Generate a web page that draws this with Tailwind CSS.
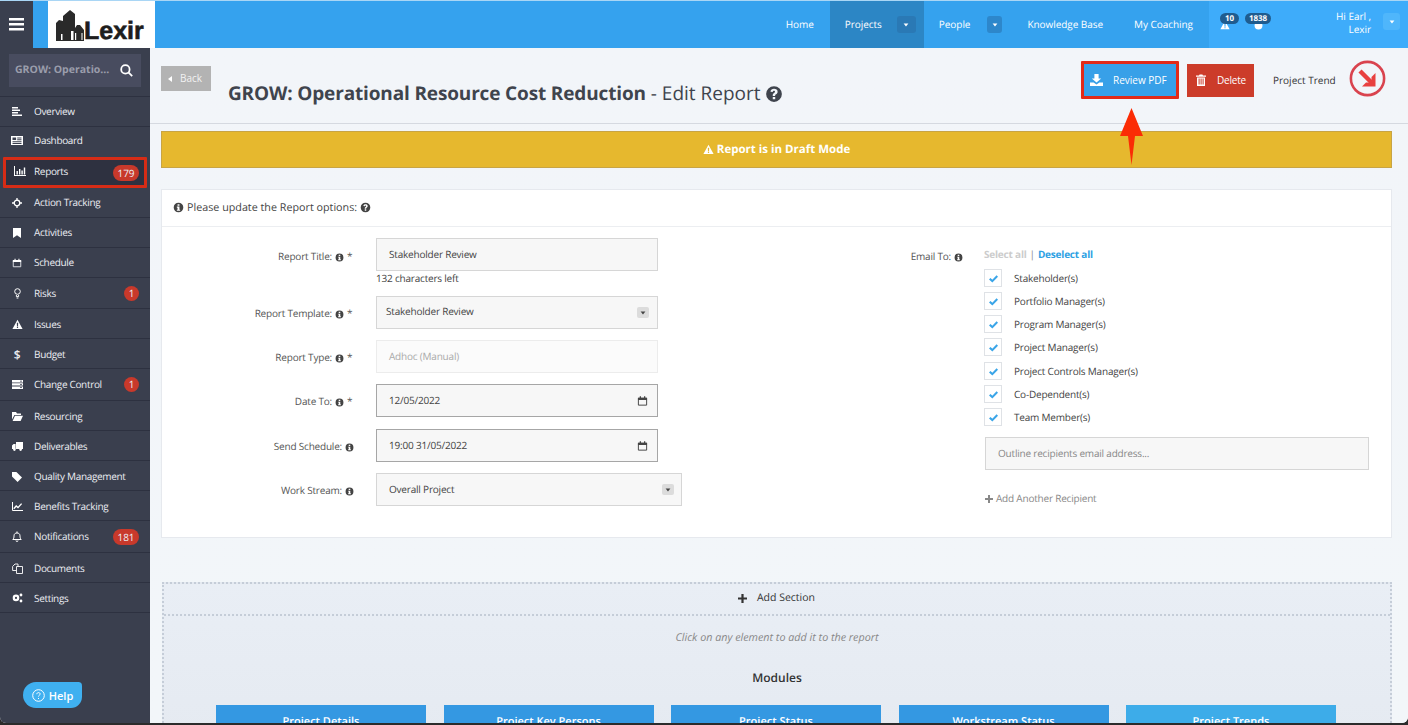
<!DOCTYPE html>
<html lang="en">
<head>
  <meta charset="UTF-8">
  <title>Edit Report</title>
  <script src="https://cdn.jsdelivr.net/npm/@tailwindcss/browser@4"></script>
</head>
<body class="bg-[#2b2b2b] overflow-hidden font-['Open_Sans',sans-serif] [text-rendering:geometricPrecision]">
  <!-- shared icons -->
  <svg class="hidden">
    <symbol id="info" viewBox="0 0 16 16"><path fill-rule="evenodd" d="M8 1a7 7 0 1 1 0 14A7 7 0 0 1 8 1zM6.6 3.2v2.3h2.8V3.2zM5.6 6.6v1.6h1v3H5.6v1.6h4.8v-1.6h-1V6.6z"/></symbol>
    <symbol id="question" viewBox="0 0 16 16"><path fill-rule="evenodd" d="M8 1a7 7 0 1 1 0 14A7 7 0 0 1 8 1zM6.9 10.6v2h2.2v-2zM8 3.4c-1.7 0-2.9.9-3.1 2.5l2 .3c.1-.7.5-1 1-1 .6 0 1 .3 1 .8s-.4.7-.9 1.1c-.7.5-1.1 1-1.1 1.9v.7h2.1v-.4c0-.4.3-.7.8-1 .8-.6 1.4-1.2 1.4-2.4 0-1.6-1.4-2.5-3.2-2.5z"/></symbol>
    <symbol id="warn" viewBox="0 0 16 16"><path fill-rule="evenodd" d="M8 1.2l7.4 13.4H.6zM7 5.6l.2 5h1.6l.2-5zM7.1 11.4v1.8h1.8v-1.8z"/></symbol>
    <symbol id="cal" viewBox="0 0 16 16"><path fill="none" stroke="currentColor" stroke-width="1.4" d="M2 4h12v10H2z"/><path d="M1.4 3.2h13.2v3.2H1.4zM4 1.2h1.8v3H4zM10.2 1.2H12v3h-1.8z"/></symbol>
    <symbol id="check" viewBox="0 0 16 16"><path fill="none" stroke="#3aa5e8" stroke-width="3" d="M2.5 8.2l3.8 3.6 7.2-7.4"/></symbol>
    <symbol id="caret" viewBox="0 0 10 6"><path d="M1 0.5h8L5 5.5z"/></symbol>
    <linearGradient id="tower" x1="0" x2="1" y1="0" y2="0"><stop offset="0" stop-color="#eee"/><stop offset="1" stop-color="#777"/></linearGradient>
  </svg>

  <div class="w-[1408px] h-[723px] flex flex-col overflow-hidden relative rounded-b-[6px] bg-[#f1f4f8]">
    <!-- top bar -->
    <header class="h-[48px] shrink-0 flex bg-[#35a2ee] border-t border-[#a9d6f5] text-white text-[10px] tracking-[-0.05px] leading-[13px]">
      <button class="w-[33px] bg-[#3a3f4e] flex items-center justify-center">
        <svg width="15" height="13" viewBox="0 0 15 13" fill="#fff"><path d="M0 0h15v2.6H0zM0 5h15v2.6H0zM0 10h15v2.6H0z"/></svg>
      </button>
      <div class="w-[15px]"></div>
      <div class="w-[107px] bg-white flex items-start pl-[8px] pt-[8px]">
        <svg class="mt-[1px]" width="28" height="31" viewBox="0 0 28 31">
          <path fill="#2a2a2a" d="M0 31V13l3-3 4 1V6l7-6 5 4v14l2-3 3 0 4 5v11z"/>
          <path fill="url(#tower)" d="M1.5 30V14l3-2v18zM8 30V8l5-5v27zM21 30V18h4v12z"/>
          <path fill="#fff" d="M5 30V24h1.5v6zM15 30V21h2.5v9zM19 30V23h1.2v7zM25.5 30v-7h1v7z"/>
        </svg>
        <span class="font-['Liberation_Sans',sans-serif] font-bold text-[#1d1d1d] text-[25px] tracking-normal leading-[25px] mt-[10px] [-webkit-text-stroke:0.6px_#1d1d1d]">Lexir</span>
      </div>
      <nav class="flex-1 flex items-center justify-end">
        <a class="mr-[16px]">Home</a>
        <div class="w-[94px] h-full bg-[#2c86c5] flex items-center pl-[15px]">
          <span>Projects</span>
          <span class="ml-auto mr-[8px] w-[19px] h-[17px] rounded-[3px] bg-[#2a79b5] flex items-center justify-center"><svg width="6" height="4" fill="#fff"><use href="#caret"/></svg></span>
        </div>
        <a class="ml-[15px]">People</a>
        <span class="ml-[17px] w-[15px] h-[17px] rounded-[3px] bg-[#2d87cb] flex items-center justify-center"><svg width="6" height="4" fill="#fff"><use href="#caret"/></svg></span>
        <a class="ml-[25px]">Knowledge Base</a>
        <a class="ml-[31px]">My Coaching</a>
        <div class="ml-[16px] w-[199px] h-full bg-[#3eacfa] flex items-center relative">
          <div class="relative w-[40px] h-full">
            <svg class="absolute left-[11px] top-[19px]" width="10" height="10" fill="#fff"><use href="#warn"/></svg>
            <span class="absolute left-[11px] top-[12px] h-[11px] px-[5px] rounded-full bg-[#1f5c8f] text-[8px] leading-[11px] font-bold">10</span>
          </div>
          <div class="relative w-[40px] h-full">
            <svg class="absolute left-[5px] top-[20px]" width="9" height="9" viewBox="0 0 16 16" fill="#fff"><path d="M8 1a7 7 0 1 1 0 14A7 7 0 0 1 8 1z"/></svg>
            <span class="absolute -left-[4px] top-[12px] h-[11px] px-[4px] rounded-full bg-[#1f5c8f] text-[8px] leading-[11px] font-bold">1838</span>
          </div>
          <div class="ml-auto text-right leading-[13px] mt-[-3px]">Hi Earl ,<br>Lexir</div>
          <span class="ml-[12px] mr-[8px] w-[17px] h-[17px] mt-[-6px] rounded-[3px] bg-[#4fb6fb] flex items-center justify-center"><svg width="6" height="4" fill="#fff"><use href="#caret"/></svg></span>
        </div>
      </nav>
    </header>

    <div class="flex flex-1 min-h-0">
      <!-- sidebar -->
      <aside class="w-[150px] shrink-0 bg-[#3a3f4e] flex flex-col text-[#eceef3] text-[10px] tracking-[-0.33px] leading-[13px]">
        <div class="h-[49px] border-b border-[#2d3140] px-[9px] pt-[6px]">
          <div class="h-[33px] bg-[#484c5f] flex items-center pl-[6px] pr-[8px] justify-between">
            <span class="font-bold text-[10.5px] tracking-normal text-[#9a9dab]">GROW: Operatio...</span>
            <svg width="13" height="13" viewBox="0 0 13 13" fill="none" stroke="#fff" stroke-width="1.8"><circle cx="5.4" cy="5.4" r="4.2"/><path d="M8.4 8.4l3.8 3.8"/></svg>
          </div>
        </div>
        <a class="h-[30px] flex items-center border-b border-[#2d3140]"><span class="w-[34px] flex justify-center pr-[1px]"><svg width="11" height="10" fill="#fff"><path d="M1 0h6v1.5H1zM1 2.5h8v1.5H1zM1 5h6v1.5H1zM1 7.5h10V9H1z"/></svg></span>Overview</a>
        <a class="h-[30px] flex items-center pb-[3px]"><span class="w-[34px] flex justify-center"><svg width="12" height="9" fill="#fff"><path fill-rule="evenodd" d="M0 0h12v9H0zM1.5 1.5v2.6h3.6V1.5zM6.2 1.5V2.5h4.3v-1zM6.2 3.3v1h4.3v-1zM1.5 5.2v1h9v-1zM1.5 7v.9h9V7z"/></svg></span>Dashboard</a>
        <!-- highlighted entry -->
        <a class="h-[31px] mx-[3px] flex items-center border-[3px] border-[#d62c16] bg-[#2e3140] rounded-[1px] pr-[5px] pb-[3px]"><span class="w-[28px] flex justify-center"><svg width="12" height="10" fill="#fff"><path d="M0 0h1v9h11v1H0zM2.5 5h1.4v3.5H2.5zM5 3h1.4v5.5H5zM7.4 4.4h1.4v4.1H7.4zM9.8 1.4h1.4v7.1H9.8z"/></svg></span>Reports<span class="ml-auto h-[16px] w-[26px] text-center mt-[3px] rounded-full bg-[#c8392b] tracking-normal leading-[16px]">179</span></a>
        <a class="h-[30px] flex items-center border-b border-[#2d3140]"><span class="w-[34px] flex justify-center"><svg width="10" height="10" viewBox="0 0 10 10" fill="none" stroke="#fff" stroke-width="1.3"><circle cx="5" cy="5" r="2.8"/><path d="M5 0v3M5 7v3M0 5h3M7 5h3"/></svg></span>Action Tracking</a>
        <a class="h-[30px] flex items-center border-b border-[#2d3140]"><span class="w-[34px] flex justify-center"><svg width="8" height="10" fill="#fff"><path d="M0 0h8v10L4 7.2 0 10z"/></svg></span>Activities</a>
        <a class="h-[30px] flex items-center border-b border-[#2d3140]"><span class="w-[34px] flex justify-center"><svg width="10" height="10" fill="#fff"><use href="#cal"/></svg></span>Schedule</a>
        <a class="h-[31px] flex items-center border-b border-[#2d3140] pr-[11px]"><span class="w-[34px] flex justify-center"><svg width="7" height="11" viewBox="0 0 7 11" fill="none" stroke="#fff"><circle cx="3.5" cy="3.5" r="2.8"/><path d="M2.4 7v1.6h2.2V7M2.6 10h1.8"/></svg></span><span>Risks</span><span class="ml-auto w-[15px] h-[15px] rounded-full bg-[#c8392b] text-center leading-[15px]">1</span></a>
        <a class="h-[30px] flex items-center border-b border-[#2d3140] pt-[2px]"><span class="w-[34px] flex justify-center"><svg width="11" height="11" fill="#fff"><use href="#warn"/></svg></span>Issues</a>
        <a class="h-[30px] flex items-center border-b border-[#2d3140] pt-[2px]"><span class="w-[34px] flex justify-center text-[12px] font-semibold">$</span>Budget</a>
        <a class="h-[32px] flex items-center border-b border-[#2d3140] pr-[11px]"><span class="w-[34px] flex justify-center"><svg width="11" height="9" fill="#fff"><path d="M0 0h11v2.4H0zM0 3.2h11v2.4H0zM0 6.4h11V9H0z"/><path fill="#3a3f4e" d="M8 .8h2v.8H8zM8 4h2v.8H8zM8 7.2h2V8H8z"/></svg></span><span>Change Control</span><span class="ml-auto w-[15px] h-[15px] rounded-full bg-[#c8392b] text-center leading-[15px]">1</span></a>
        <a class="h-[30px] flex items-center border-b border-[#2d3140] pt-[2px]"><span class="w-[34px] flex justify-center"><svg width="11" height="9" fill="#fff"><path d="M0 0h4l1 1.4h4V3H2.4L0 7.4zM3 3.8h8L8.6 9H.6z"/></svg></span>Resourcing</a>
        <a class="h-[30px] flex items-center border-b border-[#2d3140] pt-[2px]"><span class="w-[34px] flex justify-center"><svg width="11" height="9" fill="#fff"><path d="M4 0h7v7H4zM0 3.4L1.6 2h2v5H0z"/><circle cx="2.4" cy="7.6" r="1.3"/><circle cx="8.6" cy="7.6" r="1.3"/></svg></span>Deliverables</a>
        <a class="h-[30px] flex items-center border-b border-[#2d3140] pt-[2px]"><span class="w-[34px] flex justify-center"><svg width="10" height="10" fill="#fff"><path d="M0 0h4.4L10 5.6 5.6 10 0 4.4z"/></svg></span>Quality Management</a>
        <a class="h-[30px] flex items-center border-b border-[#2d3140] pt-[1px]"><span class="w-[34px] flex justify-center"><svg width="11" height="9" fill="none" stroke="#fff"><path d="M.5 0v8.5H11"/><path stroke-width="1.4" d="M1.8 6.8L4.2 4l1.8 1.6L9.6 1.6"/></svg></span>Benefits Tracking</a>
        <a class="h-[32px] flex items-center border-b border-[#2d3140] pr-[5px]"><span class="w-[34px] flex justify-center pb-[1px]"><svg width="10" height="11" viewBox="0 0 10 11" fill="none" stroke="#fff"><path d="M.8 8.5c1-1 1.2-2 1.2-3.6C2 3 3.2 2 5 2s3 1 3 2.9c0 1.6.2 2.6 1.2 3.6zM5 .4V2M4 9.5a1 1 0 0 0 2 0"/></svg></span><span class="pb-[1px]">Notifications</span><span class="ml-auto mr-[6px] h-[16px] w-[26px] text-center rounded-full bg-[#c8392b] tracking-normal leading-[16px]">181</span></a>
        <a class="h-[30px] flex items-center border-b border-[#2d3140] pt-[1px]"><span class="w-[34px] flex justify-center"><svg width="11" height="11" viewBox="0 0 11 11" fill="none" stroke="#fff" stroke-width=".9"><path d="M4.5 3.5h6v7h-6zM4.5 7.5H.6v-4L3 1h3v2.5"/></svg></span>Documents</a>
        <a class="h-[30px] flex items-center border-b border-[#2d3140] pt-[1px]"><span class="w-[34px] flex justify-center"><svg width="11" height="10" viewBox="0 0 11 10" fill="#fff"><path fill-rule="evenodd" d="M4 1.6A3.3 3.3 0 1 1 4 8.2 3.3 3.3 0 0 1 4 1.6zM4 3.8a1.1 1.1 0 1 0 0 2.2 1.1 1.1 0 0 0 0-2.2z"/><circle cx="9" cy="2" r="1.4"/><circle cx="9" cy="8" r="1.4"/></svg></span>Settings</a>
        <button class="mt-auto mb-[15px] ml-[23px] w-[59px] h-[26px] bg-[#3fb0f0] rounded-tl-[14px] rounded-bl-[14px] rounded-tr-[4px] rounded-br-[12px] flex items-center justify-center gap-[4px] text-white text-[11px] tracking-normal font-semibold">
          <svg width="13" height="13" viewBox="0 0 13 13" fill="none" stroke="#fff"><circle cx="6.5" cy="6.5" r="5.8"/><path d="M4.8 5.2c0-1 .8-1.6 1.7-1.6s1.7.6 1.7 1.5-1.7 1.2-1.7 2.4M6.5 9v1"/></svg>
          Help
        </button>
      </aside>

      <!-- main content -->
      <main class="flex-1 min-w-0 relative overflow-hidden bg-gradient-to-b from-[#f2f5f9] to-[#f2f6f9]">
        <div class="h-[76px] border-b border-[#d5d9e0] flex pl-[11px] relative">
          <button class="mt-[18px] w-[50px] h-[25px] bg-[#b3b3b3] text-[#f2f2f2] text-[10px] flex items-center justify-center gap-[8px] pr-[2px]">
            <svg width="4" height="6" viewBox="0 0 4 6" fill="#fff"><path d="M4 0v6L0 3z"/></svg>Back
          </button>
          <h1 class="ml-[17px] mt-[31px] text-[19px] leading-[28px] text-[#3f444d] whitespace-nowrap"><b class="font-bold tracking-[-0.15px]">GROW: Operational Resource Cost Reduction</b> - Edit Report <svg class="inline w-[18px] h-[18px] align-[-3px]" fill="#3f444d"><use href="#question"/></svg></h1>

          <div class="ml-auto flex items-center h-[64px] text-[10px]">
            <div class="border-[3px] border-[#e32a17] rounded-[1px] mr-[8px]">
              <button class="w-[92px] h-[32px] bg-[#38a0e8] text-white flex items-center pl-[6px] gap-[10px]">
                <svg width="13" height="12" viewBox="0 0 13 12" fill="#fff"><path d="M4.4 0h4.2v4.4h2.6L6.5 8.6 1.8 4.4h2.6zM0 8.4h3.6l2.9 2 2.9-2H13V12H0z"/></svg><span>Review PDF</span>
              </button>
            </div>
            <button class="w-[67px] h-[33px] bg-[#cc3c2a] text-white tracking-[-0.2px] flex items-center pl-[9px] gap-[11px]">
              <svg width="10" height="12" viewBox="0 0 10 12" fill="#fff"><path fill-rule="evenodd" d="M0 1.6h3L3.6.4h2.8L7 1.6h3v1.2H0zM1 3.4h8V12H1zM2.6 4.6v6h1v-6zM4.6 4.6v6h1v-6zM6.6 4.6v6h1v-6z"/></svg><span>Delete</span>
            </button>
            <span class="ml-[19px] w-[63px] text-[#333] whitespace-nowrap">Project Trend</span>
            <svg class="ml-[13px] mr-[22px] -mt-[3px]" width="37" height="37" viewBox="0 0 37 37" fill="none"><circle cx="18.5" cy="18.5" r="16.6" stroke="#d9434e" stroke-width="2.6"/><path stroke="#e8403f" stroke-width="4.4" d="M11 11l13 13"/><path fill="#e8403f" d="M26.5 13v13.5H13l4-4h5.5V17z"/></svg>
          </div>
        </div>

        <div class="ml-[11px] mr-[16px] mt-[7px] h-[37px] bg-[#e6b82e] border border-[#c8a444] flex items-center justify-center gap-[3px] text-white font-bold text-[11.5px]">
          <svg width="11" height="11" fill="#fff"><use href="#warn"/></svg> Report is in Draft Mode
        </div>

        <!-- options card -->
        <section class="ml-[11px] mr-[16px] mt-[21px] h-[349px] bg-white border border-[#e6e9ee] text-[10px] tracking-[-0.2px] leading-[13px] text-[#555]">
          <div class="h-[37px] border-b border-[#eceef1] flex items-center pl-[11px] pb-[1px] gap-[3px] text-[#444] text-[10.75px] leading-[14px] tracking-normal">
            <svg width="11" height="11" fill="#444"><use href="#info"/></svg> Please update the Report options: <svg width="11" height="11" fill="#444"><use href="#question"/></svg>
          </div>
          <div class="flex">
            <!-- left column -->
            <div class="w-[740px] pt-[11px]">
              <div class="flex">
                <div class="w-[192px] h-[33px] pt-[12px] flex justify-end gap-[3px] whitespace-nowrap">Report Title: <svg class="mt-[3px]" width="9" height="9" fill="#444"><use href="#info"/></svg><span class="w-[7px]">*</span></div>
                <div class="ml-[22px]">
                  <div class="w-[282px] h-[33px] bg-[#f7f7f7] border border-[#d6d6d6] flex items-center pl-[12px] text-[#444]">Stakeholder Review</div>
                  <div class="text-[#444] mt-[1px] -mb-[1px]">132 characters left</div>
                </div>
              </div>
              <div class="flex mt-[12px]">
                <div class="w-[192px] h-[33px] pt-[11px] flex justify-end gap-[3px] whitespace-nowrap">Report Template: <svg class="mt-[3px]" width="9" height="9" fill="#444"><use href="#info"/></svg><span class="w-[7px]">*</span></div>
                <div class="ml-[22px] w-[282px] h-[33px] bg-[#f7f7f7] border border-[#d6d6d6] flex items-center pl-[9px] pr-[8px] justify-between text-[#444]"><span class="pb-[2px]">Stakeholder Review</span><span class="w-[12px] h-[11px] bg-[#dcdcdc] rounded-[2px] flex items-center justify-center"><svg width="6" height="4" fill="#444"><use href="#caret"/></svg></span></div>
              </div>
              <div class="flex mt-[11px]">
                <div class="w-[192px] h-[33px] pt-[11px] flex justify-end gap-[3px] whitespace-nowrap">Report Type: <svg class="mt-[3px]" width="9" height="9" fill="#444"><use href="#info"/></svg><span class="w-[7px]">*</span></div>
                <div class="ml-[22px] w-[282px] h-[33px] bg-[#fbfbfb] border border-[#ececec] flex items-center pl-[12px] text-[#aaa]">Adhoc (Manual)</div>
              </div>
              <div class="flex mt-[11px]">
                <div class="w-[192px] h-[33px] pt-[11px] flex justify-end gap-[3px] whitespace-nowrap">Date To: <svg class="mt-[3px]" width="9" height="9" fill="#444"><use href="#info"/></svg><span class="w-[7px]">*</span></div>
                <div class="ml-[22px] w-[282px] h-[33px] bg-[#f7f7f7] border border-[#a6a6a6] flex items-center pl-[12px] pr-[9px] justify-between text-[#444]">12/05/2022<svg class="text-[#444]" width="11" height="12" fill="#444"><use href="#cal"/></svg></div>
              </div>
              <div class="flex mt-[12px]">
                <div class="w-[192px] h-[33px] pt-[11px] flex justify-end gap-[3px] whitespace-nowrap">Send Schedule: <svg class="mt-[3px]" width="9" height="9" fill="#444"><use href="#info"/></svg></div>
                <div class="ml-[22px] w-[282px] h-[33px] bg-[#f7f7f7] border border-[#a6a6a6] flex items-center pl-[12px] pr-[9px] justify-between text-[#444]">19:00 31/05/2022<svg class="text-[#444]" width="11" height="12" fill="#444"><use href="#cal"/></svg></div>
              </div>
              <div class="flex mt-[11px]">
                <div class="w-[192px] h-[33px] pt-[11px] flex justify-end gap-[3px] whitespace-nowrap">Work Stream: <svg class="mt-[3px]" width="9" height="9" fill="#444"><use href="#info"/></svg></div>
                <div class="ml-[22px] w-[306px] h-[33px] bg-[#f7f7f7] border border-[#d6d6d6] flex items-center pl-[12px] pr-[7px] justify-between text-[#444]">Overall Project<span class="w-[12px] h-[11px] bg-[#dcdcdc] rounded-[2px] flex items-center justify-center"><svg width="6" height="4" fill="#444"><use href="#caret"/></svg></span></div>
              </div>
            </div>
            <!-- right column -->
            <div class="flex-1 flex pt-[21px]">
              <div class="w-[61px] pt-[2px] flex justify-end gap-[3px] whitespace-nowrap h-[16px]">Email To: <svg class="mt-[3px] shrink-0" width="9" height="9" fill="#444"><use href="#info"/></svg></div>
              <div class="ml-[21px]">
                <div class="flex gap-[3px] font-bold h-[14px] mb-[7px]"><span class="text-[#ccc]">Select all</span><span class="text-[#888] font-normal">|</span><span class="text-[#2da1e3]">Deselect all</span></div>
                <div class="h-[18px] flex items-center gap-[12px] text-[#444]"><span class="w-[18px] h-[18px] border border-[#dfe2e6] flex items-center justify-center"><svg width="11" height="11"><use href="#check"/></svg></span><span>Stakeholder(s)</span></div>
                <div class="mt-[5px] h-[18px] flex items-center gap-[12px] text-[#444]"><span class="w-[18px] h-[18px] border border-[#dfe2e6] flex items-center justify-center"><svg width="11" height="11"><use href="#check"/></svg></span><span>Portfolio Manager(s)</span></div>
                <div class="mt-[5px] h-[18px] flex items-center gap-[12px] text-[#444]"><span class="w-[18px] h-[18px] border border-[#dfe2e6] flex items-center justify-center"><svg width="11" height="11"><use href="#check"/></svg></span><span>Program Manager(s)</span></div>
                <div class="mt-[5px] h-[18px] flex items-center gap-[12px] text-[#444]"><span class="w-[18px] h-[18px] border border-[#dfe2e6] flex items-center justify-center"><svg width="11" height="11"><use href="#check"/></svg></span><span>Project Manager(s)</span></div>
                <div class="mt-[6px] h-[18px] flex items-center gap-[12px] text-[#444]"><span class="w-[18px] h-[18px] border border-[#dfe2e6] flex items-center justify-center"><svg width="11" height="11"><use href="#check"/></svg></span><span>Project Controls Manager(s)</span></div>
                <div class="mt-[5px] h-[18px] flex items-center gap-[12px] text-[#444]"><span class="w-[18px] h-[18px] border border-[#dfe2e6] flex items-center justify-center"><svg width="11" height="11"><use href="#check"/></svg></span><span>Co-Dependent(s)</span></div>
                <div class="mt-[5px] h-[18px] flex items-center gap-[12px] text-[#444]"><span class="w-[18px] h-[18px] border border-[#dfe2e6] flex items-center justify-center"><svg width="11" height="11"><use href="#check"/></svg></span><span>Team Member(s)</span></div>
                <div class="mt-[11px] ml-[1px] w-[384px] h-[33px] bg-[#f7f7f7] border border-[#d6d6d6] flex items-center pl-[12px] text-[#888]">Outline recipients email address...</div>
                <div class="mt-[22px] ml-[1px] flex items-center gap-[3px] text-[#888]"><svg width="8" height="8" fill="#888"><path d="M3 0h2v3h3v2H5v3H3V5H0V3h3z"/></svg>Add Another Recipient</div>
              </div>
            </div>
          </div>
        </section>

        <!-- report builder -->
        <section class="ml-[12px] mr-[16px] mt-[44px] h-[200px] border-2 border-dotted border-b-0 border-[#c5cdd8] bg-gradient-to-b from-[#e9eef5] to-[#e4e9f0] text-[#333]">
          <div class="h-[32px] border-b-2 border-dotted border-[#c5cdd8] flex items-center justify-center gap-[10px] text-[10.5px] pr-[1px]">
            <svg class="-mt-[1px]" width="9" height="9" fill="#333"><path d="M3.4 0h2.2v3.4H9v2.2H5.6V9H3.4V5.6H0V3.4h3.4z"/></svg><span>Add Section</span>
          </div>
          <p class="mt-[15px] text-center italic text-[10.75px] leading-[14px] text-[#888]">Click on any element to add it to the report</p>
          <h2 class="mt-[25px] text-center text-[12px] leading-[16px] font-semibold text-[#333]">Modules</h2>
          <div class="mt-[19px] ml-[52px] grid grid-cols-5 gap-[17.5px] w-[1120px] text-white text-[11px] font-semibold text-center">
            <div class="h-[40px] bg-[#3498e2] pt-[9px]">Project Details</div>
            <div class="h-[40px] bg-[#3498e2] pt-[9px]">Project Key Persons</div>
            <div class="h-[40px] bg-[#3498e2] pt-[9px]">Project Status</div>
            <div class="h-[40px] bg-[#3498e2] pt-[9px]">Workstream Status</div>
            <div class="h-[40px] bg-[#3dace9] pt-[9px]">Project Trends</div>
          </div>
        </section>
      </main>
    </div>

    <!-- annotation arrow -->
    <svg class="absolute left-[1115px] top-[106px]" width="34" height="62" viewBox="0 0 34 62"><path fill="#fb2c05" d="M16.5 2L28 30H20L16.5 59 13 30H5z"/></svg>
  </div>
</body>
</html>
